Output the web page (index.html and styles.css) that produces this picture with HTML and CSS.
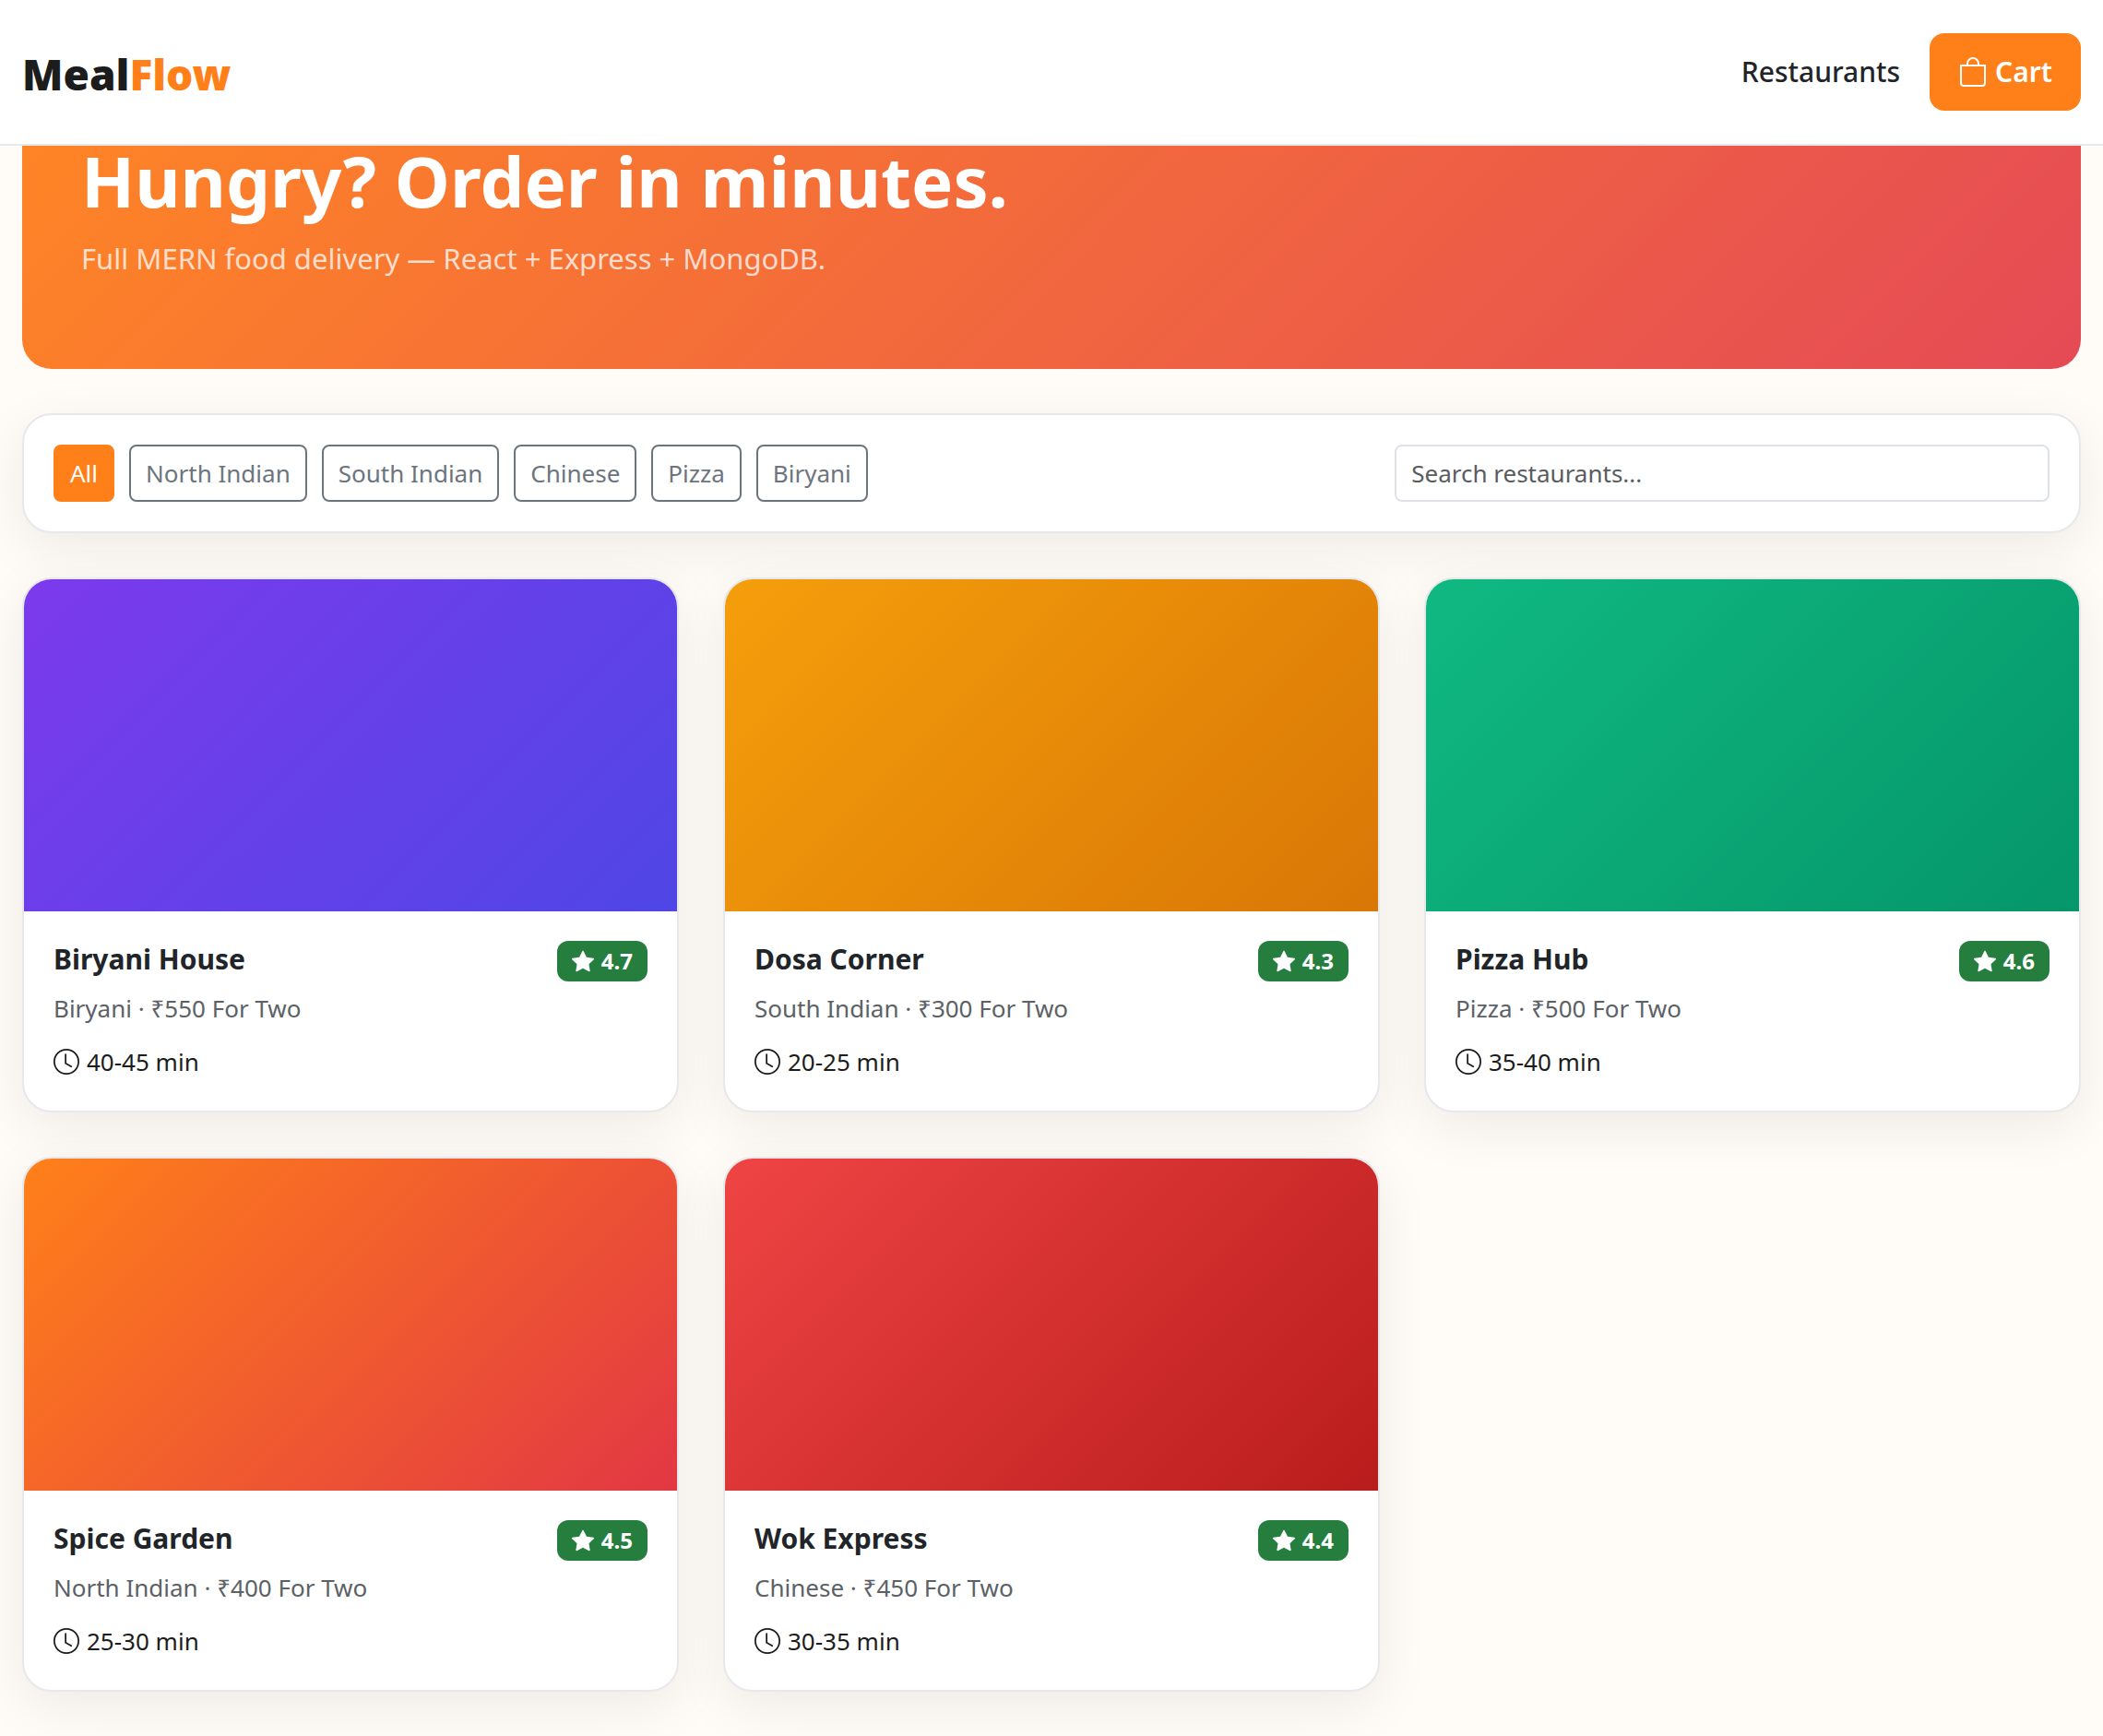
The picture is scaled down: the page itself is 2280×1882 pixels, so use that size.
FILE: index.html
```html
<!DOCTYPE html>
<html lang="en">
  <head>
    <meta charset="UTF-8" />
    <meta name="viewport" content="width=device-width, initial-scale=1.0" />
    <title>MealFlow</title>
    <link rel="stylesheet" href="styles.css" />
  </head>
  <body>
    <!-- Shared icons -->
    <svg class="sprite" aria-hidden="true">
      <symbol id="icon-bag" viewBox="0 0 16 16">
        <path d="M8 1a2.5 2.5 0 0 1 2.5 2.5V4h-5v-.5A2.5 2.5 0 0 1 8 1m3.5 3v-.5a3.5 3.5 0 1 0-7 0V4H1v10a2 2 0 0 0 2 2h10a2 2 0 0 0 2-2V4zM2 5h12v9a1 1 0 0 1-1 1H3a1 1 0 0 1-1-1z" />
      </symbol>
      <symbol id="icon-star" viewBox="0 0 16 16">
        <path d="M3.612 15.443c-.386.198-.824-.149-.746-.592l.83-4.73L.173 6.765c-.329-.314-.158-.888.283-.95l4.898-.696L7.538.792c.197-.39.73-.39.927 0l2.184 4.327 4.898.696c.441.062.612.636.282.95l-3.522 3.356.83 4.73c.078.443-.36.79-.746.592L8 13.187l-4.389 2.256z" />
      </symbol>
      <symbol id="icon-clock" viewBox="0 0 16 16">
        <path d="M8 3.5a.5.5 0 0 0-1 0V9a.5.5 0 0 0 .252.434l3.5 2a.5.5 0 0 0 .496-.868L8 8.71z" />
        <path d="M8 16A8 8 0 1 0 8 0a8 8 0 0 0 0 16m7-8A7 7 0 1 1 1 8a7 7 0 0 1 14 0" />
      </symbol>
    </svg>

    <header class="navbar">
      <a class="brand" href="#">Meal<span>Flow</span></a>
      <nav class="nav-links">
        <a class="nav-link" href="#restaurants">Restaurants</a>
        <button class="cart-btn" type="button">
          <svg class="icon"><use href="#icon-bag" /></svg>
          Cart
        </button>
      </nav>
    </header>

    <main class="container">
      <section class="hero">
        <h1>Hungry? Order in minutes.</h1>
        <p>Full MERN food delivery — React + Express + MongoDB.</p>
      </section>

      <section class="filters">
        <div class="filter-list">
          <button class="filter active" type="button">All</button>
          <button class="filter" type="button">North Indian</button>
          <button class="filter" type="button">South Indian</button>
          <button class="filter" type="button">Chinese</button>
          <button class="filter" type="button">Pizza</button>
          <button class="filter" type="button">Biryani</button>
        </div>
        <input class="search" type="search" placeholder="Search restaurants..." aria-label="Search restaurants" />
      </section>

      <section class="restaurants" id="restaurants">
        <article class="card">
          <div class="cover cover-violet"></div>
          <div class="card-body">
            <div class="card-top">
              <h2>Biryani House</h2>
              <span class="rating"><svg class="icon"><use href="#icon-star" /></svg>4.7</span>
            </div>
            <p class="meta">Biryani · ₹550 For Two</p>
            <p class="time"><svg class="icon"><use href="#icon-clock" /></svg>40-45 min</p>
          </div>
        </article>

        <article class="card">
          <div class="cover cover-amber"></div>
          <div class="card-body">
            <div class="card-top">
              <h2>Dosa Corner</h2>
              <span class="rating"><svg class="icon"><use href="#icon-star" /></svg>4.3</span>
            </div>
            <p class="meta">South Indian · ₹300 For Two</p>
            <p class="time"><svg class="icon"><use href="#icon-clock" /></svg>20-25 min</p>
          </div>
        </article>

        <article class="card">
          <div class="cover cover-green"></div>
          <div class="card-body">
            <div class="card-top">
              <h2>Pizza Hub</h2>
              <span class="rating"><svg class="icon"><use href="#icon-star" /></svg>4.6</span>
            </div>
            <p class="meta">Pizza · ₹500 For Two</p>
            <p class="time"><svg class="icon"><use href="#icon-clock" /></svg>35-40 min</p>
          </div>
        </article>

        <article class="card">
          <div class="cover cover-orange"></div>
          <div class="card-body">
            <div class="card-top">
              <h2>Spice Garden</h2>
              <span class="rating"><svg class="icon"><use href="#icon-star" /></svg>4.5</span>
            </div>
            <p class="meta">North Indian · ₹400 For Two</p>
            <p class="time"><svg class="icon"><use href="#icon-clock" /></svg>25-30 min</p>
          </div>
        </article>

        <article class="card">
          <div class="cover cover-red"></div>
          <div class="card-body">
            <div class="card-top">
              <h2>Wok Express</h2>
              <span class="rating"><svg class="icon"><use href="#icon-star" /></svg>4.4</span>
            </div>
            <p class="meta">Chinese · ₹450 For Two</p>
            <p class="time"><svg class="icon"><use href="#icon-clock" /></svg>30-35 min</p>
          </div>
        </article>
      </section>
    </main>
  </body>
</html>
```
FILE: styles.css
```css
:root {
  --brand: #ff8019;
  --text: #212529;
  --muted: #5c6166;
  --border: #e7e8eb;
  --shadow: 0 16px 60px rgba(15, 23, 42, 0.07);
}

* {
  box-sizing: border-box;
}

body {
  margin: 0;
  background: #fffbf6;
  color: var(--text);
  font-family: "Noto Sans", "Open Sans", sans-serif;
  font-size: 26px;
  line-height: 42px;
}

h1,
h2,
p {
  margin: 0;
}

button,
input {
  font: inherit;
}

.sprite {
  display: none;
}

.icon {
  flex: none;
  width: 28px;
  height: 28px;
  fill: currentColor;
}

/* Navbar */
.navbar {
  position: fixed;
  top: 0;
  left: 0;
  right: 0;
  z-index: 10;
  display: flex;
  align-items: center;
  justify-content: space-between;
  padding: 36px 24px;
  background: #fff;
  border-bottom: 2px solid var(--border);
}

.brand {
  padding-top: 4px;
  color: #1c1c1c;
  font-size: 46px;
  font-weight: 900;
  line-height: 72px;
  text-decoration: none;
}

.brand span {
  color: var(--brand);
}

.nav-links {
  display: flex;
  align-items: center;
  gap: 32px;
  font-size: 30px;
  font-weight: 500;
  line-height: 48px;
}

.nav-link {
  color: var(--text);
  text-decoration: none;
}

.cart-btn {
  display: flex;
  align-items: center;
  gap: 8px;
  padding: 18px 31px;
  background: var(--brand);
  border: 0;
  border-radius: 16px;
  color: #fff;
  font-weight: 600;
  cursor: pointer;
}

.cart-btn .icon {
  width: 32px;
  height: 32px;
}

/* Page */
.container {
  padding: 80px 24px 48px;
}

.hero {
  padding: 68px 64px 96px;
  background: linear-gradient(135deg, rgba(255, 128, 25, 0.95), rgba(226, 55, 68, 0.9));
  border-radius: 32px;
  color: #fff;
}

.hero h1 {
  margin-bottom: 12px;
  font-size: 76px;
  font-weight: 700;
  line-height: 96px;
}

.hero p {
  color: rgba(255, 255, 255, 0.75);
  font-size: 31px;
  line-height: 48px;
}

.filters {
  display: flex;
  align-items: center;
  justify-content: space-between;
  gap: 48px;
  margin: 48px 0;
  padding: 32px;
  background: #fff;
  border: 2px solid var(--border);
  border-radius: 32px;
  box-shadow: var(--shadow);
}

.filter-list {
  display: flex;
  flex-wrap: wrap;
  gap: 16px;
}

.filter {
  padding: 8px 16px;
  background: transparent;
  border: 2px solid #6c757d;
  border-radius: 8px;
  color: #6c757d;
  cursor: pointer;
}

.filter.active {
  background: var(--brand);
  border-color: var(--brand);
  color: #fff;
}

.search {
  width: 32.8%;
  height: 62px;
  padding: 8px 16px;
  background: #fff;
  border: 2px solid #dee2e6;
  border-radius: 8px;
  color: var(--text);
  appearance: none;
}

.search::placeholder {
  color: #595c5f;
  opacity: 1;
}

/* Restaurant cards */
.restaurants {
  display: grid;
  grid-template-columns: repeat(3, 1fr);
  gap: 48px;
}

.card {
  overflow: hidden;
  background: #fff;
  border: 2px solid var(--border);
  border-radius: 32px;
  box-shadow: var(--shadow);
}

.cover {
  height: 360px;
}

.cover-violet {
  background: linear-gradient(135deg, #7c3aed, #4f46e5);
}

.cover-amber {
  background: linear-gradient(135deg, #f59e0b, #d97706);
}

.cover-green {
  background: linear-gradient(135deg, #10b981, #059669);
}

.cover-orange {
  background: linear-gradient(135deg, #ff8019, #e23744);
}

.cover-red {
  background: linear-gradient(135deg, #ef4444, #b91c1c);
}

.card-body {
  padding: 32px;
}

.card-top {
  display: flex;
  align-items: flex-start;
  justify-content: space-between;
  margin-bottom: 8px;
}

.card h2 {
  font-size: 30px;
  font-weight: 700;
  line-height: 40px;
}

.rating {
  display: flex;
  align-items: center;
  gap: 8px;
  padding: 0 16px;
  background: #267e3e;
  border-radius: 12px;
  color: #fff;
  font-size: 24px;
  font-weight: 700;
  line-height: 44px;
}

.rating .icon {
  width: 24px;
  height: 24px;
}

.meta {
  margin-bottom: 16px;
  color: var(--muted);
}

.time {
  display: flex;
  align-items: center;
  gap: 8px;
  color: #1c1c1c;
}

@media (max-width: 1200px) {
  .restaurants {
    grid-template-columns: repeat(2, 1fr);
  }

  .filters {
    flex-direction: column;
    align-items: stretch;
  }

  .search {
    width: 100%;
  }
}
```
